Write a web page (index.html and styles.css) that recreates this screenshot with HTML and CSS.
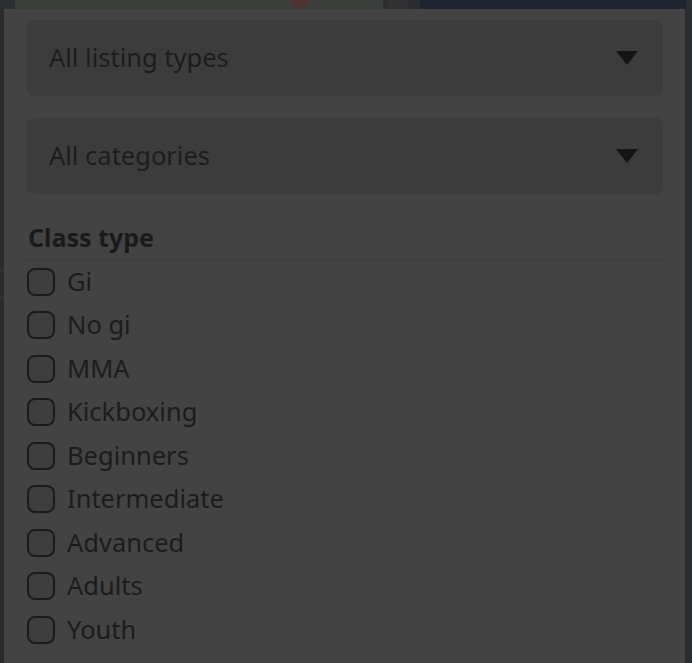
FILE: index.html
```html
<!DOCTYPE html>
<html lang="en">
<head>
<meta charset="utf-8">
<title>Filters</title>
<link rel="stylesheet" href="styles.css">
</head>
<body>
<div class="backdrop">
  <div class="bd-dark bd-left"></div>
  <div class="bd-map"><span class="bd-pin"></span></div>
  <div class="bd-box"></div>
  <div class="bd-navy"></div>
  <div class="bd-dark bd-right"></div>
</div>
<div class="stage">
  <div class="side-strip"><span class="side-line l1"></span><span class="side-line l2"></span></div>
  <div class="panel">
    <div class="select">
      <span class="select-text">All listing types</span>
      <span class="caret"></span>
    </div>
    <div class="select">
      <span class="select-text">All categories</span>
      <span class="caret"></span>
    </div>
    <div class="group-title">Class type</div>
    <ul class="checks">
      <li class="check"><span class="box"></span><span class="label">Gi</span></li>
      <li class="check"><span class="box"></span><span class="label">No gi</span></li>
      <li class="check"><span class="box"></span><span class="label">MMA</span></li>
      <li class="check"><span class="box"></span><span class="label">Kickboxing</span></li>
      <li class="check"><span class="box"></span><span class="label">Beginners</span></li>
      <li class="check"><span class="box"></span><span class="label">Intermediate</span></li>
      <li class="check"><span class="box"></span><span class="label">Advanced</span></li>
      <li class="check"><span class="box"></span><span class="label">Adults</span></li>
      <li class="check"><span class="box"></span><span class="label">Youth</span></li>
    </ul>
  </div>
  <div class="side-strip right"></div>
</div>
</body>
</html>
```
FILE: styles.css
```css
* { box-sizing: border-box; }
html, body { margin: 0; padding: 0; }
body {
  background: #2b2c2f;
  font-family: "Noto Sans", "Lato", sans-serif;
  color: #1b1b1b;
  height: 663px;
  overflow: hidden;
}
.backdrop {
  display: flex;
  height: 9px;
}
.bd-dark { background: #2c2d30; }
.bd-left { width: 15px; }
.bd-map {
  width: 368px;
  background: #3b3e3b;
  position: relative;
}
.bd-pin {
  position: absolute;
  left: 275px;
  top: 0;
  width: 20px;
  height: 8px;
  background: #4f3333;
  border-radius: 0 0 10px 10px;
}
.bd-box { width: 20px; margin-left: 5px; background: #313131; margin-right: 12px; }
.bd-navy { width: 266px; background: #1f2431; }
.bd-right { flex: 1; }

.stage {
  display: flex;
  height: 654px;
}
.side-strip {
  width: 4px;
  background: #2b2c2f;
  position: relative;
}
.side-strip.right { width: 7px; }
.side-line {
  position: absolute;
  left: 0;
  width: 4px;
  height: 1px;
  background: #3a3b3e;
}
.l1 { top: 261px; }
.l2 { top: 288px; }
.panel {
  width: 681px;
  background: #434343;
  padding: 11px 22px 0 23px;
}
.select {
  height: 76px;
  background: #3c3c3c;
  border-radius: 7px;
  display: flex;
  align-items: center;
  justify-content: space-between;
  padding: 0 25px 3px 22px;
  margin-bottom: 22px;
}
.select-text {
  font-size: 25.5px;
  color: #1c1c1c;
}
.caret {
  width: 0;
  height: 0;
  border-left: 11px solid transparent;
  border-right: 11px solid transparent;
  border-top: 14px solid #141414;
  margin-top: 3px;
}
.group-title {
  font-weight: 700;
  font-size: 25px;
  color: #1a1a1a;
  padding: 4px 0 5px 1px;
  border-bottom: 1px solid #3b3b3b;
}
.checks {
  list-style: none;
  margin: 0;
  padding: 0;
}
.check {
  display: flex;
  align-items: center;
  height: 43.5px;
  gap: 12px;
}
.box {
  width: 28px;
  height: 28px;
  border: 2px solid #1b1b1b;
  border-radius: 8px;
  background: #3e3e3e;
}
.label {
  font-size: 25.5px;
  color: #1c1c1c;
  padding-bottom: 2px;
}
```
